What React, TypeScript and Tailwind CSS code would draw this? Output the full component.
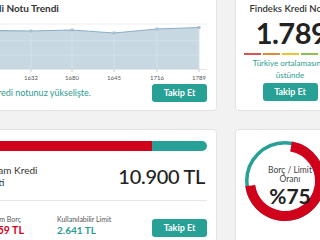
export default function App() {
  const pts: [number, number][] = [
    [6, 16.5],
    [48, 17],
    [89, 16],
    [131, 19],
    [174, 15],
    [216, 13.5],
  ];
  const labels = ["1620", "1632", "1680", "1645", "1716", "1789"];
  const line = pts.map((p, i) => `${i === 0 ? "M" : "L"}${p[0]},${p[1]}`).join(" ");
  const area = `M0,16.5 ${pts.map((p) => `L${p[0]},${p[1]}`).join(" ")} L216,55 L0,55 Z`;

  const cx = 42;
  const cy = 42;
  const rRed = 35;
  const rTeal = 38.25;
  const circ = 2 * Math.PI * rRed;

  return (
    <div className="w-[320px] h-[240px] overflow-hidden bg-[#f2f2f2] font-['Lato',sans-serif] text-[#333]">
      <div className="ml-[-27px] mt-[-8px] grid grid-cols-[244px_110px] grid-rows-[119px_131px] gap-[18px]">
        {/* Kredi Notu Trendi */}
        <div className="bg-white border border-[#e3e3e3] rounded-[4px] px-[9px] pt-[9px] flex flex-col">
          <div className="ml-[-3px] text-[10px] leading-[12px] font-bold text-[#333] h-[12px]">Kredi Notu Trendi</div>
          <svg width="224" height="70" viewBox="0 0 224 70" className="block">
            <line x1="0" y1="10" x2="224" y2="10" stroke="#eeeeee" strokeWidth="1" />
            <path d={area} fill="#c7d8e3" />
            <line x1="0" y1="26.7" x2="216" y2="26.7" stroke="#d3e1ea" strokeWidth="1" />
            <line x1="0" y1="41" x2="216" y2="41" stroke="#d3e1ea" strokeWidth="1" />
            {pts.map((p, i) => (
              <line key={"v" + i} x1={p[0]} y1={p[1]} x2={p[0]} y2="55" stroke="#d3e1ea" strokeWidth="1" />
            ))}
            <path d={line} fill="none" stroke="#8aafc6" strokeWidth="1.2" />
            {pts.map((p, i) => (
              <rect key={"p" + i} x={p[0] - 1.5} y={p[1] - 1.5} width="3" height="3" fill="#a9bfcd" />
            ))}
            <line x1="0" y1="55.5" x2="224" y2="55.5" stroke="#e6e6e6" strokeWidth="1" />
            {pts.map((p, i) => (
              <line key={"t" + i} x1={p[0]} y1="55" x2={p[0]} y2="58" stroke="#cccccc" strokeWidth="1" />
            ))}
            {pts.map((p, i) => (
              <text key={"l" + i} x={p[0]} y="66" textAnchor="middle" fontSize="6" fill="#555" fontFamily="Lato, sans-serif">
                {labels[i]}
              </text>
            ))}
          </svg>
          <div className="flex items-center justify-between">
            <span className="ml-[9px] text-[9px] leading-[12px] text-[#2a9d8f]">Kredi notunuz yükselişte.</span>
            <button className="w-[55px] h-[18px] rounded-[3px] bg-[#27a096] text-white text-[9px] font-bold flex items-center justify-center">
              Takip Et
            </button>
          </div>
        </div>

        {/* Findeks Kredi Notu */}
        <div className="bg-white border border-[#e3e3e3] rounded-[4px] px-[9px] pt-[10px] flex flex-col items-center">
          <div className="text-[9.5px] leading-[12px] font-semibold text-[#333] whitespace-nowrap">Findeks Kredi Notu</div>
          <div className="text-[29px] leading-[30px] font-bold text-[#222] mt-[3px] tracking-[-0.5px] ml-[3px]">1.789</div>
          <div className="flex gap-[2px] mt-[5px]">
            <div className="w-[17px] h-[2px] bg-[#d9534f]" />
            <div className="w-[17px] h-[2px] bg-[#e08a3c]" />
            <div className="w-[17px] h-[2px] bg-[#f0c330]" />
            <div className="w-[17px] h-[2px] bg-[#8cc152]" />
            <div className="w-[17px] h-[2px] bg-[#4caf50]" />
          </div>
          <div className="text-[8px] leading-[12px] text-[#2a9d8f] text-center mt-[2px] whitespace-nowrap">
            Türkiye ortalamasının
            <br />
            üstünde
          </div>
          <button className="mt-[2px] w-[55px] h-[18px] rounded-[3px] bg-[#27a096] text-white text-[9px] font-bold flex items-center justify-center">
            Takip Et
          </button>
        </div>

        {/* Toplam Kredi Limiti */}
        <div className="bg-white border border-[#e3e3e3] rounded-[4px] px-[9px] pt-[11px] flex flex-col">
          <div className="flex h-[10px] rounded-r-full overflow-hidden">
            <div className="w-[75.4%] bg-[#d0021b]" />
            <div className="flex-1 bg-[#27a096]" />
          </div>
          <div className="flex items-center justify-between mt-[13px] h-[24px]">
            <div className="ml-[-3px] text-[10px] leading-[12px] text-[#333]">
              Toplam Kredi
              <br />
              Limiti
            </div>
            <div className="text-[20px] leading-[24px] font-medium text-[#222] mr-[2px] tracking-[-0.3px]">10.900 TL</div>
          </div>
          <div className="h-px bg-[#e6e6e6] mt-[12px]" />
          <div className="flex items-end mt-[13px]">
            <div className="w-[74px] flex flex-col">
              <span className="text-[7px] leading-[10px] text-[#555]">Toplam Borç</span>
              <span className="text-[10.5px] leading-[13px] font-bold text-[#d0021b]">8.259 TL</span>
            </div>
            <div className="flex flex-col">
              <span className="text-[7px] leading-[10px] text-[#555]">Kullanılabilir Limit</span>
              <span className="text-[10px] leading-[13px] font-bold text-[#2a9d8f]">2.641 TL</span>
            </div>
            <button className="ml-auto w-[55px] h-[18px] rounded-[3px] bg-[#27a096] text-white text-[9px] font-bold flex items-center justify-center">
              Takip Et
            </button>
          </div>
        </div>

        {/* Borç / Limit Oranı */}
        <div className="relative bg-white border border-[#e3e3e3] rounded-[4px] px-[9px] pt-[9px] flex flex-col items-start">
          <svg width="84" height="84" viewBox="0 0 84 84" className="block ml-[-2px]">
            <circle cx={cx} cy={cy} r={rTeal} fill="none" stroke="#27a096" strokeWidth="3.5" />
            <circle
              cx={cx}
              cy={cy}
              r={rRed}
              fill="none"
              stroke="#d0021b"
              strokeWidth="10"
              strokeDasharray={`${circ * 0.7} ${circ}`}
              transform={`rotate(-80 ${cx} ${cy})`}
            />
          </svg>
          <div className="absolute left-0 right-0 top-[36px] flex flex-col items-center">
            <span className="text-[8.5px] leading-[9px] text-[#444]">Borç / Limit</span>
            <span className="text-[8.5px] leading-[9px] text-[#444]">Oranı</span>
            <span className="mt-[1px] text-[21px] leading-[22px] font-bold text-[#222]">%75</span>
          </div>
        </div>
      </div>
    </div>
  );
}
